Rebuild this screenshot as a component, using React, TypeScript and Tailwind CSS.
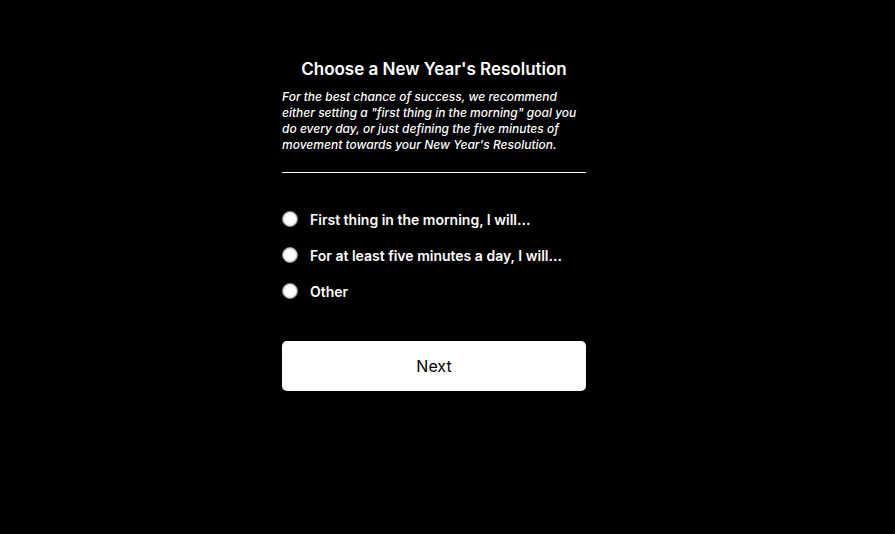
import { useState } from "react";

const options = [
  "First thing in the morning, I will...",
  "For at least five minutes a day, I will...",
  "Other",
];

export default function App() {
  const [choice, setChoice] = useState<string | null>(null);
  return (
    <div className="min-h-[534px] bg-black text-white font-['Inter','Liberation_Sans',sans-serif] flex justify-center pr-[27px]">
      <div className="w-[304px] pt-[58px]">
        <h1 className="text-[17px] leading-[22px] font-semibold text-center">
          Choose a New Year's Resolution
        </h1>
        <p className="mt-[9px] text-[12px] leading-[16px] italic font-medium">
          For the best chance of success, we recommend either setting a "first thing in the
          morning" goal you do every day, or just defining the five minutes of movement towards
          your New Year's Resolution.
        </p>
        <div className="mt-[19px] h-px bg-white" />
        <div className="mt-[36px] flex flex-col gap-[16px]">
          {options.map((o) => (
            <label key={o} className="flex items-center h-[20px] cursor-pointer">
              <span
                onClick={() => setChoice(o)}
                className="w-[16px] h-[16px] rounded-full bg-white border border-[#8e8e93] shadow-[inset_0_0_2px_rgba(0,0,0,0.4)] flex items-center justify-center"
              >
                {choice === o && <span className="w-[6px] h-[6px] rounded-full bg-black" />}
              </span>
              <span onClick={() => setChoice(o)} className="ml-[12px] text-[14px] font-semibold">
                {o}
              </span>
            </label>
          ))}
        </div>
        <button className="mt-[40px] w-full h-[50px] bg-white text-black rounded-[5px] text-[16px]">
          Next
        </button>
      </div>
    </div>
  );
}
